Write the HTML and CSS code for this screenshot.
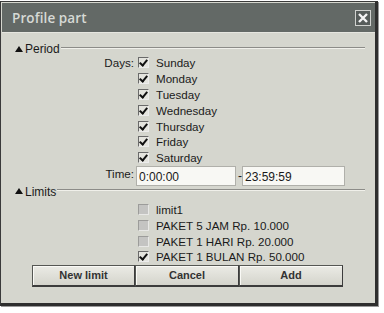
FILE: index.html
```html
<!DOCTYPE html>
<html>
<head>
<meta charset="utf-8">
<link rel="stylesheet" href="styles.css">
</head>
<body>
<div class="window">
  <div class="titlebar">
    <span class="title">Profile part</span>
    <span class="close"><svg width="12" height="12" viewBox="0 0 12 12"><path d="M2 2L10 10M10 2L2 10" stroke="#f4f4f4" stroke-width="2.4"/></svg></span>
  </div>
  <div class="body">
    <div class="section-head"><span class="tri"></span><span class="sec-label">Period</span><span class="rule"></span></div>
    <div class="grid days">
      <div class="lbl">Days:</div>
      <div class="list">
        <div class="item"><span class="cb on"></span>Sunday</div>
        <div class="item"><span class="cb on"></span>Monday</div>
        <div class="item"><span class="cb on"></span>Tuesday</div>
        <div class="item"><span class="cb on"></span>Wednesday</div>
        <div class="item"><span class="cb on"></span>Thursday</div>
        <div class="item"><span class="cb on"></span>Friday</div>
        <div class="item"><span class="cb on"></span>Saturday</div>
      </div>
    </div>
    <div class="grid time">
      <div class="lbl top">Time:</div>
      <div class="fields">
        <div class="field">0:00:00</div>
        <span class="dash">-</span>
        <div class="field f2">23:59:59</div>
      </div>
    </div>
    <div class="section-head limits"><span class="tri"></span><span class="sec-label">Limits</span><span class="rule"></span></div>
    <div class="grid limit-list">
      <div class="lbl"></div>
      <div class="list">
        <div class="item"><span class="cb off"></span>limit1</div>
        <div class="item"><span class="cb off"></span>PAKET 5 JAM Rp. 10.000</div>
        <div class="item"><span class="cb off"></span>PAKET 1 HARI Rp. 20.000</div>
        <div class="item"><span class="cb on"></span>PAKET 1 BULAN Rp. 50.000</div>
      </div>
    </div>
    <div class="buttons">
      <div class="btn">New limit</div>
      <div class="btn">Cancel</div>
      <div class="btn">Add</div>
    </div>
  </div>
</div>
</body>
</html>
```

FILE: styles.css
```css
html, body {
  margin: 0;
  padding: 0;
  background: #ffffff;
}
body {
  width: 384px;
  height: 313px;
  overflow: hidden;
}
.window {
  width: 374px;
  height: 301px;
  border: 1px solid #3a3a3a;
  border-right: 3px solid #2e2e2e;
  border-bottom: 3px solid #2e2e2e;
  margin-top: 1px;
  background: #d5d6ce;
  font-family: "Liberation Sans", Arial, sans-serif;
  font-size: 11.6px;
  color: #1a1a1a;
  box-shadow: 1px 1px 0 #9a9a9a;
}
.titlebar {
  height: 29px;
  margin: 1px 0 0 1px;
  background: #636966;
  border-bottom: 1px solid #e6e6e0;
  display: flex;
  align-items: center;
  justify-content: space-between;
  padding: 0 4px 0 10px;
}
.title {
  font-family: "Open Sans", "DejaVu Sans", sans-serif;
  font-weight: 600;
  font-size: 13.5px;
  color: #d6d9d5;
  letter-spacing: 0.1px;
}
.close {
  width: 14px;
  height: 14px;
  border: 1px solid #d0d2cf;
  background: #565c5a;
  display: flex;
  align-items: center;
  justify-content: center;
}
.body {
  padding: 9px 0 0 0;
}
.section-head {
  display: flex;
  align-items: center;
  height: 14px;
  padding-left: 14px;
  padding-right: 10px;
}
.tri {
  width: 0;
  height: 0;
  border-left: 4.5px solid transparent;
  border-right: 4.5px solid transparent;
  border-bottom: 6px solid #111;
  margin-right: 2px;
  margin-top: -1px;
}
.sec-label {
  font-size: 12px;
  margin-right: 1px;
}
.rule {
  flex: 1;
  height: 0;
  border-top: 1px solid #8c8c88;
  border-bottom: 1px solid #f0f0ea;
  margin-top: -3px;
}
.grid {
  display: grid;
  grid-template-columns: 135px 1fr;
}
.lbl {
  text-align: right;
  line-height: 15.8px;
  padding-right: 2px;
}
.lbl.top {
  line-height: 16px;
}
.list {
  display: flex;
  flex-direction: column;
}
.item {
  display: flex;
  align-items: center;
  height: 15.8px;
  white-space: nowrap;
}
.days {
  margin-top: -1px;
}
.cb {
  width: 9px;
  height: 9px;
  margin: 0 7px 0 2px;
  border: 1px solid;
  border-color: #6a6a6a #ececec #ececec #6a6a6a;
  background: #e4e4de;
  position: relative;
}
.cb.on::after {
  content: "";
  position: absolute;
  left: 2px;
  top: 0px;
  width: 3px;
  height: 6px;
  border: solid #111;
  border-width: 0 2px 2px 0;
  transform: rotate(40deg);
}
.cb.off {
  background: #c4c4c2;
  border-color: #9c9c9a #e8e8e6 #e8e8e6 #9c9c9a;
}
.fields {
  display: flex;
  align-items: center;
}
.field {
  width: 96px;
  height: 18px;
  line-height: 20px;
  background: #f8f8f4;
  border: 1px solid #b0b0aa;
  padding-left: 2px;
  font-size: 12px;
}
.field.f2 {
  width: 99px;
}
.dash {
  width: 4px;
  margin-left: 2px;
  font-size: 12px;
}
.limits {
  margin-top: -1px;
}
.limit-list {
  margin-top: 3px;
}
.buttons {
  display: grid;
  grid-template-columns: 103px 104px 104px;
  margin: 0 0 0 31px;
  width: 311px;
}
.btn {
  height: 19px;
  border: 1px solid #555753;
  border-right-color: #3c3c3c;
  border-bottom: 2px solid #3c3c3c;
  background: linear-gradient(#ebebe5, #d4d4cc);
  display: flex;
  align-items: center;
  justify-content: center;
  font-weight: bold;
  font-size: 11px;
  color: #333;
  box-shadow: inset 1px 1px 0 #fafaf6;
}
```
